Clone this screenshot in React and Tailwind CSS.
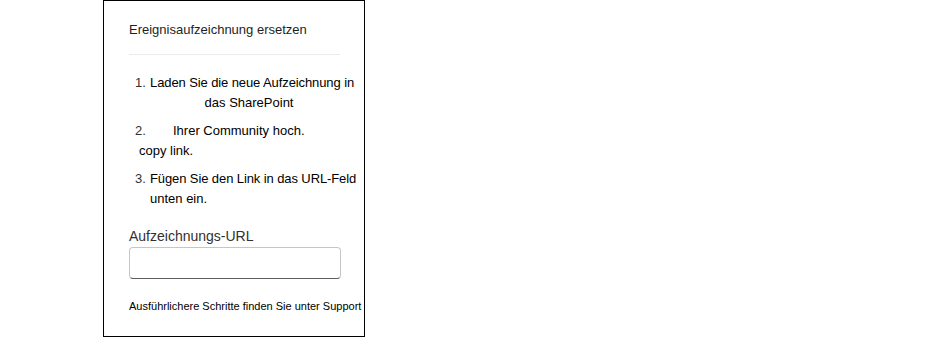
import React from 'react'

const App = () => {
    return (
        <div className="w-[926px] h-[338px] bg-white font-['Liberation_Sans',Arial,sans-serif] text-[#201f1e]">
            <div className="ml-[103px] w-[262px] h-[337px] border border-black">
                {/* Card */}
                <div className="h-full rounded-md shadow-[0_0_2px_rgba(0,0,0,0.12)] pl-[25px] pr-[24px]">
                    <h1 className="pt-[21px] text-[13px] leading-[16px] text-[#201f1e]">Ereignisaufzeichnung ersetzen</h1>
                    <div className="mt-[16px] h-px bg-[#edebe9]"></div>

                    {/* Steps */}
                    <ol className="mt-[18px] text-[13px] leading-[20px] text-black">
                        <li className="flex">
                            <span className="w-[20px] pl-[6px] shrink-0 text-[#323130]">1.</span>
                            <div className="w-[210px] pl-[1px]">
                                <div className="whitespace-nowrap tracking-[-0.1px]">Laden Sie die neue Aufzeichnung in</div>
                                <div className="text-center pr-[6px]">das SharePoint</div>
                            </div>
                        </li>
                        <li className="flex mt-[8px]">
                            <span className="w-[20px] pl-[6px] shrink-0 text-[#323130]">2.</span>
                            <div>
                                <div className="pl-[24px]">Ihrer Community hoch.</div>
                                <div className="-ml-[10px]">copy link.</div>
                            </div>
                        </li>
                        <li className="flex mt-[8px]">
                            <span className="w-[20px] pl-[6px] shrink-0 text-[#323130]">3.</span>
                            <div className="pl-[1px]">
                                <div className="whitespace-nowrap tracking-[-0.1px]">Fügen Sie den Link in das URL-Feld</div>
                                <div>unten ein.</div>
                            </div>
                        </li>
                    </ol>

                    {/* URL field */}
                    <label className="block mt-[18px] text-[14px] leading-[18px] text-[#323130]">Aufzeichnungs-URL</label>
                    <input
                        type="text"
                        className="mt-[2px] w-[212px] h-[32px] rounded-[4px] border border-[#c8c6c4] border-b-[#605e5c] bg-white outline-none px-2 text-[13px]"
                    />

                    <p className="mt-[20px] text-[11px] leading-[14px] whitespace-nowrap text-black">Ausführlichere Schritte finden Sie unter Support</p>
                </div>
            </div>
        </div>
    )
}

export default App
